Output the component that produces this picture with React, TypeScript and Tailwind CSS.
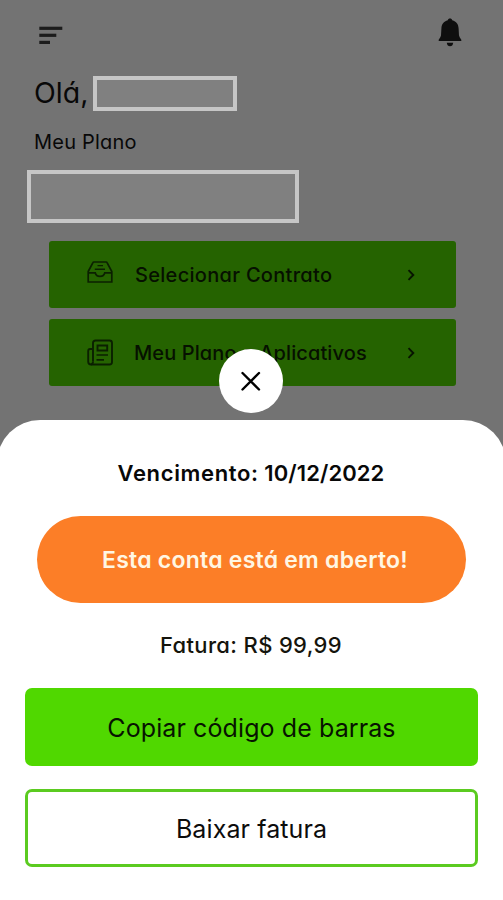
import React from "react";

function ChevronIcon() {
  return (
    <svg width="8" height="12" viewBox="0 0 8 12" fill="none">
      <path d="M1.5 1.2L6.3 6L1.5 10.8" stroke="#071400" strokeWidth="1.9" />
    </svg>
  );
}

function InboxIcon() {
  return (
    <svg className="-mt-[5px]" width="26" height="22" viewBox="0 0 26 22" fill="none" stroke="#0b2000" strokeWidth="1.7">
      <path d="M1.2 10.5L5.8 1.8Q6.1 1 7 1H19Q19.9 1 20.2 1.8L24.8 10.5V21H1.2V10.5Z" />
      <path d="M1.2 11.8H8.2Q9 15.4 13 15.4T17.8 11.8H24.8" />
      <path d="M10.5 4.6H16M7.8 8.2H18" strokeWidth="1.4" />
    </svg>
  );
}

function NewsIcon() {
  return (
    <svg width="26" height="27" viewBox="0 0 26 27" fill="none" stroke="#0b2000" strokeWidth="1.9">
      <path d="M6 22.5V4Q6 1.5 8.5 1.5H22.5Q25 1.5 25 4V23Q25 25.5 22.5 25.5H4Q1.2 25.5 1.2 22.5V12Q1.2 10 3.2 10H6" />
      <path d="M6 22.5Q6 25 4 25.5" />
      <path d="M10.5 6.5H20.2V11.5H10.5Z" />
      <path d="M9.5 16H21M9.5 20.8H17" strokeWidth="1.7" />
    </svg>
  );
}

const shortcuts = [
  { label: "Selecionar Contrato", icon: <InboxIcon />, text: "ml-[22px] tracking-[0.3px]" },
  { label: "Meu Plano e Aplicativos", icon: <NewsIcon />, text: "ml-[21px] tracking-[0.1px]" },
];

function Account() {
  return (
    <div className="flex h-[420px] flex-col bg-[#737373] text-[#080808]">
      <header className="flex h-[75px] items-start justify-between pt-[18px] pr-[41px] pl-[39px]">
        <svg className="mt-[8px]" width="24" height="19" viewBox="0 0 24 19" fill="#1c1c1c">
          <rect x="0.3" y="0.7" width="23" height="3.2" />
          <rect x="0.3" y="7.7" width="17" height="3.2" />
          <rect x="0.3" y="14.8" width="10.7" height="3.2" />
        </svg>
        <svg width="24" height="29" viewBox="0 0 24 29" fill="#0f0f0f">
          <path d="M12 0.5C13.2 0.5 14 1.2 14.2 2.2C18.4 3.2 20.4 6.3 20.6 10.5L21 17.5Q21.2 19 23.3 21.8V23H0.7V21.8Q2.8 19 3 17.5L3.4 10.5C3.6 6.3 5.6 3.2 9.8 2.2C10 1.2 10.8 0.5 12 0.5Z" />
          <path d="M8.8 24.8H15.2Q14.8 28.3 12 28.3T8.8 24.8Z" />
        </svg>
      </header>

      <div className="flex h-9 items-center pl-[34px]">
        <h1 className="w-[59px] text-[28.5px] leading-9">Olá,</h1>
        <div className="h-[35px] w-36 border-4 border-[#c6c6c6] bg-[#808080]" />
      </div>
      <p className="mt-[16px] pl-[34px] text-[20px] leading-[30px] tracking-[0.2px]">Meu Plano</p>
      <div className="mt-[13px] ml-[27px] h-[53px] w-[272px] border-4 border-[#c6c6c6] bg-[#808080]" />

      <div className="mt-[18px] flex flex-col gap-[11px] pr-[47px] pl-[49px]">
        {shortcuts.map((item) => (
          <button
            key={item.label}
            className="flex h-[67px] items-center rounded-[3px] bg-[#256300] pr-[41px] pl-[38px]"
          >
            {item.icon}
            <span className={`text-[20px] font-medium text-[#061000] ${item.text}`}>{item.label}</span>
            <span className="ml-auto">
              <ChevronIcon />
            </span>
          </button>
        ))}
      </div>
    </div>
  );
}

function InvoiceSheet() {
  return (
    <section className="relative -mx-[3px] flex h-[480px] flex-col rounded-t-[43px] bg-white px-[28px]">
      <button
        aria-label="Fechar"
        className="absolute -top-[71px] left-[222px] flex h-16 w-16 items-center justify-center rounded-full bg-white"
      >
        <svg width="20" height="20" viewBox="0 0 20 20" stroke="#000" strokeWidth="2.4" strokeLinecap="round">
          <path d="M1.5 2L18 18.5M18 2L1.5 18.5" />
        </svg>
      </button>

      <div className="flex flex-col [font-feature-settings:'cv11']">
        <p className="mt-[36px] pr-[1px] text-center text-[22px] leading-[34px] font-semibold text-[#080808]">
          <span className="tracking-[0.65px]">Vencimento:</span>{" "}
          <span className="tracking-[0.1px]">10/12/2022</span>
        </p>
        <div className="mx-[12px] mt-[26px] flex h-[87px] items-center justify-center rounded-full bg-[#fc7e27] pt-[2px] pl-[7px] text-[23px] font-semibold tracking-[0.24px] text-[#fff6e3]">
          Esta conta está em aberto!
        </div>
        <p className="mt-[25px] pr-[1px] text-center text-[22px] leading-[34px] font-medium tracking-[0.35px] text-[#14140c]">
          Fatura: R$ 99,99
        </p>
      </div>
      <button className="mt-[26px] h-[78px] rounded-[7px] bg-[#50d800] pt-[3px] text-[25px] tracking-[0.1px] text-[#071400]">
        Copiar código de barras
      </button>
      <button className="mt-[23px] h-[78px] rounded-[7px] border-[3px] border-[#5bcb20] bg-white pt-[3px] text-[25px] tracking-[0.1px] text-[#0c0c0c]">
        Baixar fatura
      </button>
    </section>
  );
}

export default function App() {
  return (
    <div className="h-[900px] w-[503px] overflow-hidden bg-[#737373] font-['Inter',sans-serif]">
      <div className="[font-feature-settings:'cv11']">
        <Account />
      </div>
      <InvoiceSheet />
    </div>
  );
}
